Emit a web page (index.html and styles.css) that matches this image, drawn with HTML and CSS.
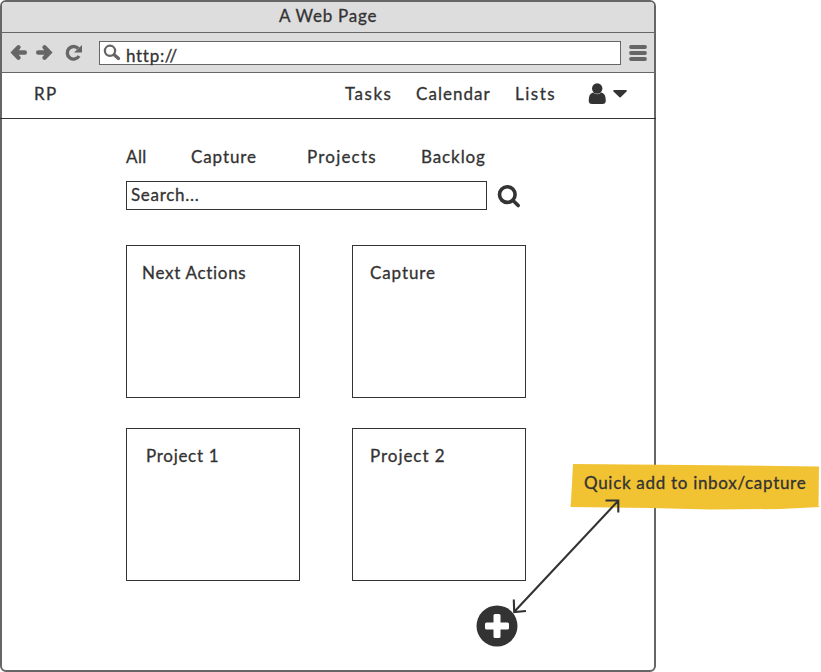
FILE: index.html
```html
<!DOCTYPE html>
<html lang="en">
<head>
<meta charset="utf-8">
<title>A Web Page</title>
<link rel="stylesheet" href="styles.css">
</head>
<body>
<div class="window">
  <div class="titlebar"><span class="t-title">A Web Page</span></div>
  <div class="toolbar">
    <svg class="nav-icons" width="97" height="39" viewBox="0 0 97 39">
      <g fill="none" stroke="#666" stroke-width="4.400" stroke-linecap="round" stroke-linejoin="miter">
        <path d="M12 19.500H22.800M16.500 14.300L11.500 19.500L16.500 24.700"/>
        <path d="M36.200 19.500H47M42.500 14.300L47.500 19.500L42.500 24.700"/>
      </g>
      <path d="M76.200 15.500A6.300 6.300 0 1 0 77 23" fill="none" stroke="#666" stroke-width="3.400"/>
      <path d="M80 12V19.500H72Z" fill="#666"/>
    </svg>
    <div class="address">
      <svg width="26" height="22" viewBox="0 0 26 22"><circle cx="10" cy="8.800" r="5.100" fill="none" stroke="#666" stroke-width="2.300"/><path d="M14.200 12.800L18.500 16.500" stroke="#666" stroke-width="3.300" stroke-linecap="round"/></svg>
      <span class="t-url">http://</span>
    </div>
    <svg class="menu-icon" width="18" height="17" viewBox="0 0 18 17"><path d="M2 2H16M2 8H16M2 14H16" stroke="#666" stroke-width="3.800" stroke-linecap="round"/></svg>
  </div>
  <header class="header">
    <span class="brand">RP</span>
    <nav class="main-nav">
      <span class="t-tasks">Tasks</span><span class="t-calendar">Calendar</span><span class="t-lists">Lists</span>
    </nav>
    <svg class="account" width="40" height="22" viewBox="0 0 40 22"><circle cx="9.200" cy="5.500" r="5.200" fill="#333"/><path d="M5 9.500Q9.200 13 13.500 9.500Q17.800 10.500 17.800 17.500Q17.800 21 14.500 21H4Q.7 21 .7 17.500Q.7 10.500 5 9.500Z" fill="#333"/><path d="M25.700 7H38.500Q39.200 7.500 38.500 8.500L32.700 14.300Q32.100 14.800 31.500 14.300L25.500 8.500Q24.900 7.500 25.700 7Z" fill="#333"/></svg>
  </header>
  <main class="content">
    <nav class="tabs">
      <span class="t-all">All</span><span class="t-capture">Capture</span><span class="t-projects">Projects</span><span class="t-backlog">Backlog</span>
    </nav>
    <div class="search-row">
      <div class="search"><span class="t-search">Search...</span></div>
      <svg width="24" height="24" viewBox="0 0 24 24"><circle cx="10.300" cy="9.600" r="7.800" fill="none" stroke="#333" stroke-width="3.600"/><path d="M16 15.500L21.200 20.500" stroke="#333" stroke-width="3.600" stroke-linecap="round"/></svg>
    </div>
    <div class="cards">
      <section class="card c-next">Next Actions</section>
      <section class="card c-capture">Capture</section>
      <section class="card c-one">Project 1</section>
      <section class="card c-two">Project 2</section>
    </div>
  </main>
  <svg class="add" width="42" height="42" viewBox="0 0 42 42"><circle cx="21" cy="21" r="20.500" fill="#333"/><g fill="#fff"><rect x="9" y="17.500" width="24" height="7" rx="1.500"/><rect x="17.500" y="9" width="7" height="24" rx="1.500"/></g></svg>
</div>
<div class="note">
  <svg class="note-bg" width="250" height="48" viewBox="0 0 250 48"><path d="M3 1L120 2L249 3.500L248.500 43L250 44L210 46L140 46.500L80 45L.5 44L1 38L2 20Z" fill="#f1c232"/></svg>
  <span class="note-text">Quick add to inbox/capture</span>
</div>
<svg class="arrow" width="112" height="120" viewBox="0 0 112 120"><path d="M5 117L109 6M96.500 5.500L109.300 5.500L109.300 17.500M4.800 104.500L5.200 117L17 116" fill="none" stroke="#333" stroke-width="2.100"/></svg>
</body>
</html>
```
FILE: styles.css
```css
* { box-sizing: border-box; }
body {
  margin: 0;
  position: relative;
  width: 821px;
  height: 672px;
  overflow: hidden;
  background: #fff;
  color: #333;
  font: 17px/20px Lato, "Open Sans", sans-serif;
  -webkit-text-stroke: .3px #333;
  white-space: nowrap;
}
svg { display: block; flex: none; }
.window {
  display: flex;
  flex-direction: column;
  width: 656px;
  height: 672px;
  border: 2px solid #666;
  border-radius: 6px;
  background: #fff;
}
.titlebar {
  height: 31px;
  padding: 4px 0 0 277px;
  background: #ddd;
  border-bottom: 1px solid #666;
  border-radius: 4px 4px 0 0;
}
.toolbar {
  display: flex;
  height: 40px;
  background: #ddd;
  border-bottom: 1px solid #666;
}
.address {
  display: flex;
  width: 522px;
  height: 24px;
  margin-top: 8px;
  background: #fff;
  border: 1px solid #666;
}
.t-url { margin-top: 4px; }
.menu-icon { margin: 12px 0 0 8px; }
.header {
  display: flex;
  height: 46px;
  margin: 0 -2px;
  padding: 11px 0 0 34px;
  border-bottom: 1px solid #333;
}
.brand { width: 311px; }
.main-nav { display: flex; width: 243px; }
.t-tasks { width: 71px; }
.t-calendar { width: 99px; }
.account { margin-top: -1px; }
.content { width: 402px; margin: 28px 0 0 124px; }
.tabs { display: flex; height: 34px; }
.t-all { width: 65px; }
.t-capture { width: 116px; }
.t-projects { width: 114px; }
.search-row { display: flex; gap: 10px; }
.search-row svg { margin-top: 4px; }
.search {
  width: 361px;
  height: 29px;
  padding: 3px 0 0 4px;
  border: 1px solid #333;
}
.cards {
  display: grid;
  grid-template-columns: 174px 174px;
  grid-auto-rows: 153px;
  gap: 30px 52px;
  margin-top: 35px;
}
.card { padding: 17px 0 0 17px; border: 1px solid #333; }
.c-next { padding-left: 15px; }
.c-one { padding-left: 19px; }
.add { margin: 24px 0 0 474px; }
.note { position: absolute; left: 570px; top: 463px; width: 250px; height: 48px; }
.note-bg { position: absolute; left: 0; top: 0; }
.note-text { position: relative; display: block; margin: 10px 0 0 14px; }
.arrow { position: absolute; left: 509px; top: 495px; }

.brand { letter-spacing: 1.4px; }
.t-title { letter-spacing: .75px; }
.t-url { letter-spacing: .7px; }
.t-tasks { letter-spacing: 1.5px; }
.t-calendar { letter-spacing: 1.05px; }
.t-lists { letter-spacing: 1.5px; }
.t-all { letter-spacing: .4px; }
.t-capture, .t-backlog { letter-spacing: .9px; }
.t-projects { letter-spacing: 1.2px; }
.t-search { letter-spacing: .7px; }
.c-next { letter-spacing: .7px; }
.c-capture { letter-spacing: .9px; }
.c-one { letter-spacing: .7px; }
.c-two { letter-spacing: .95px; }
.note-text { letter-spacing: .7px; }
```
